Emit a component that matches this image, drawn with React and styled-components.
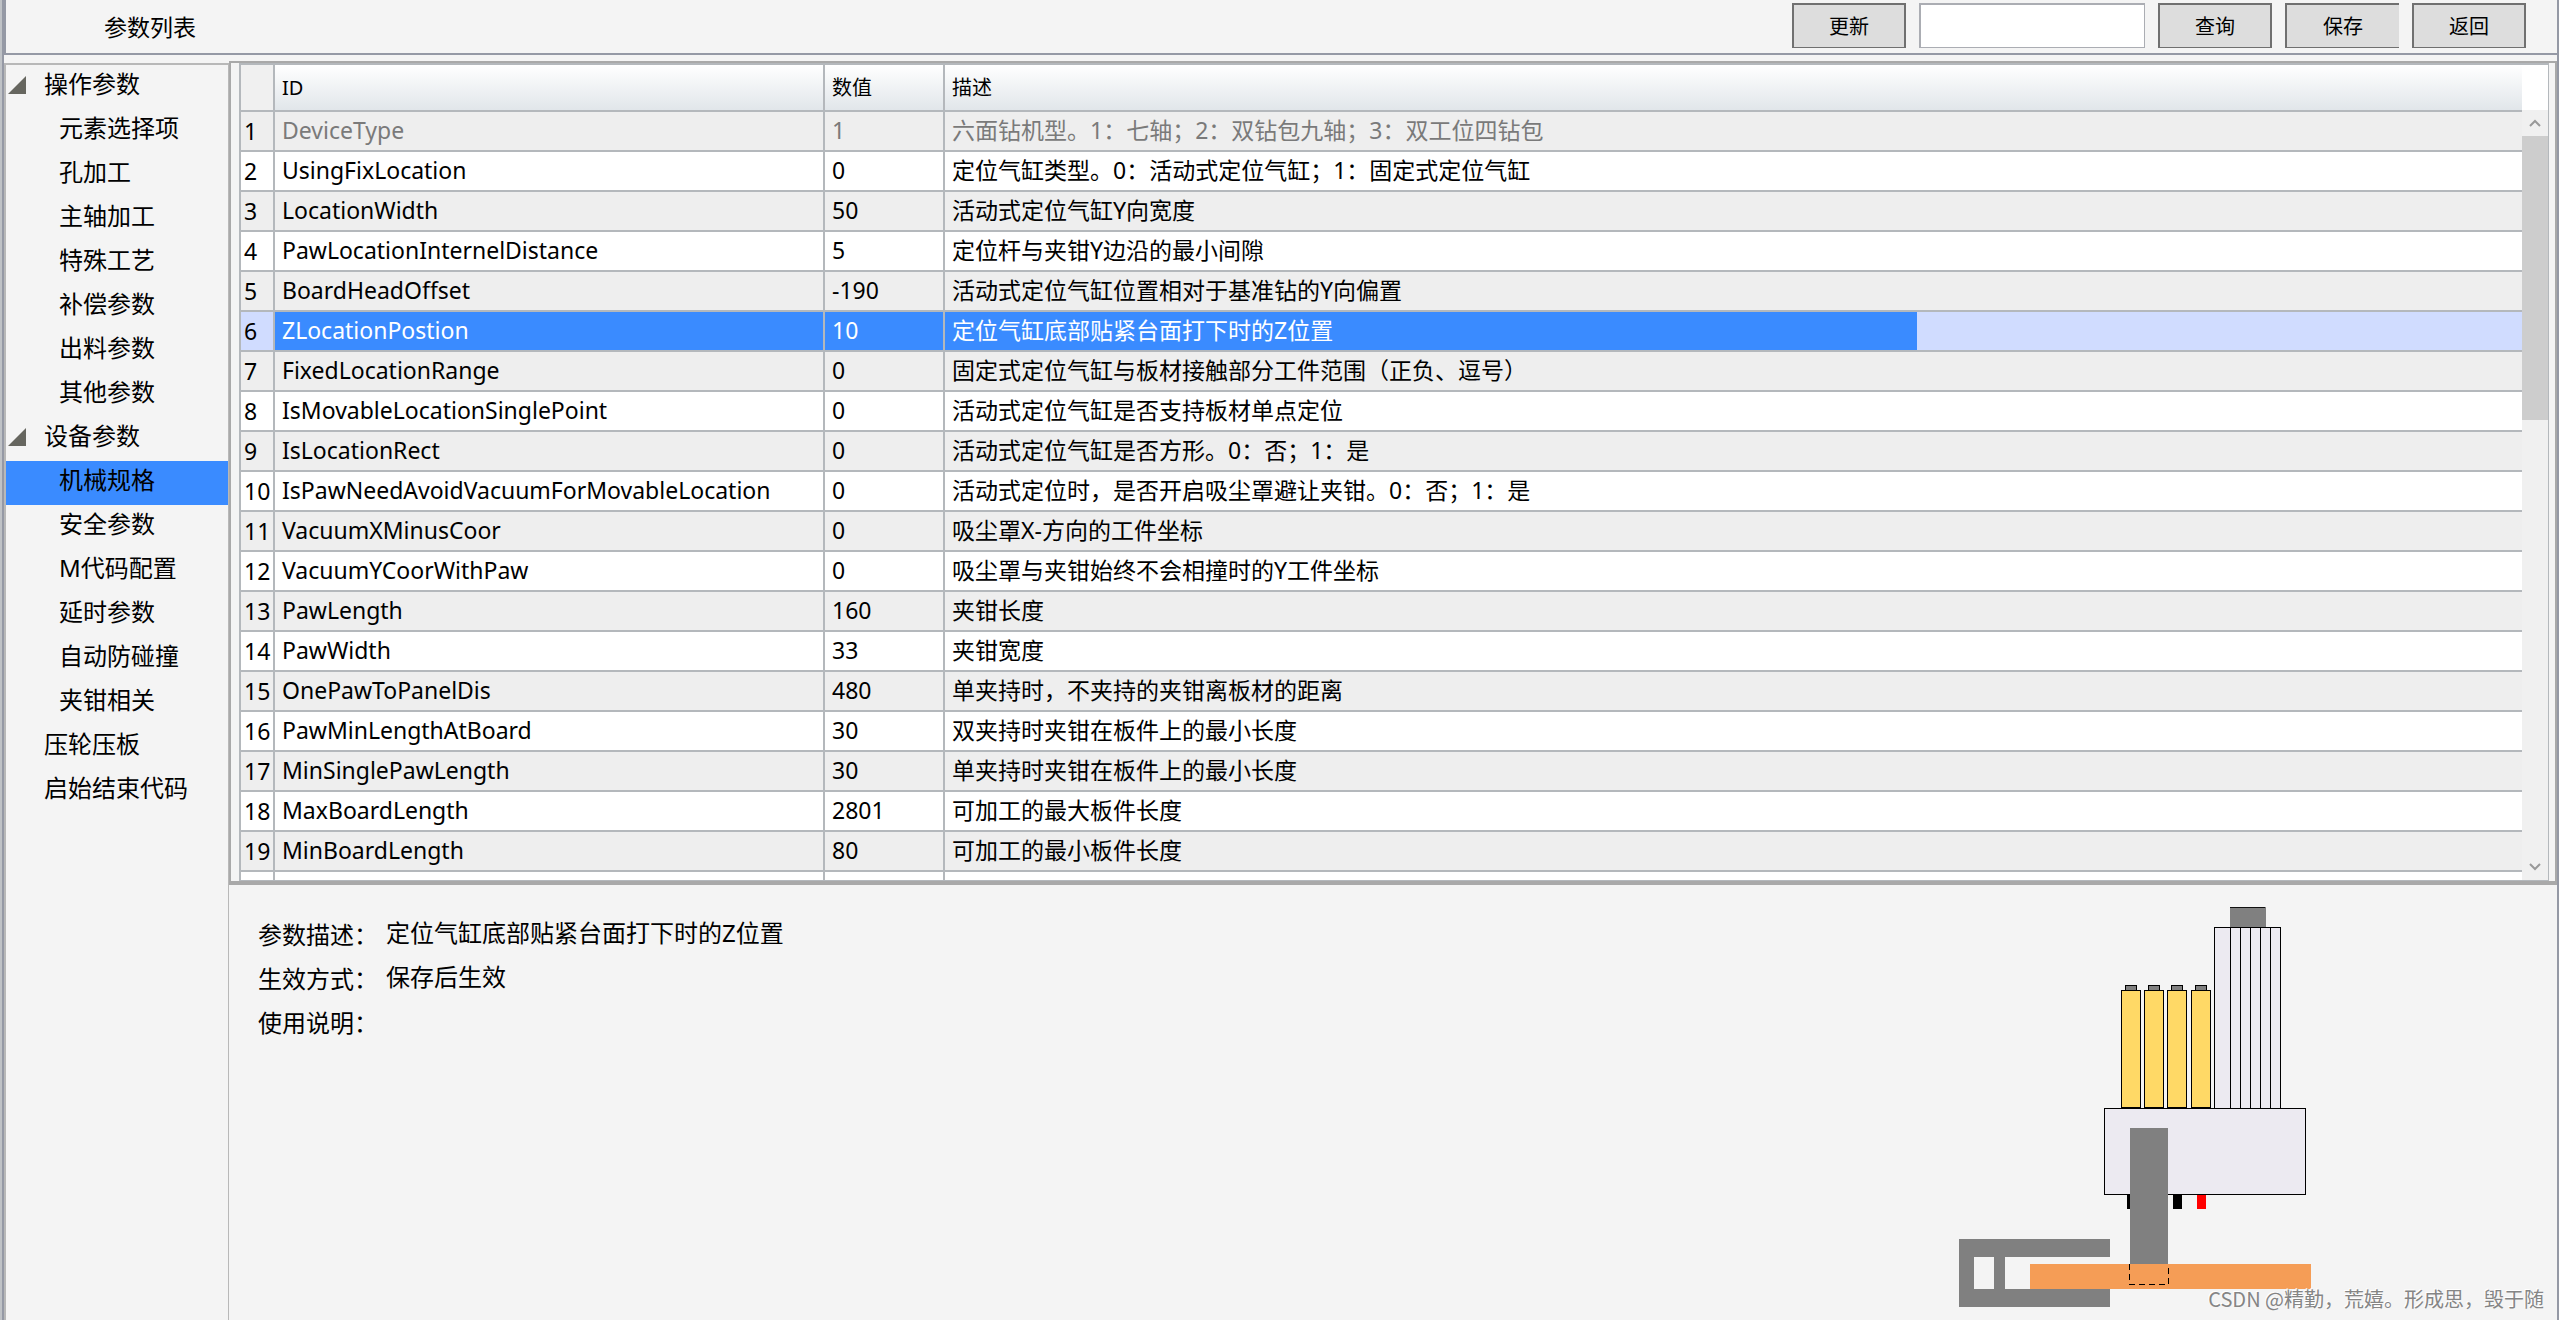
import React, { useState } from 'react';
import styled, { createGlobalStyle } from 'styled-components';

const SANS = '"Noto Sans", "Noto Sans CJK SC", sans-serif';
const GRID = '#b4b8bc';
const SLATE = '#9599a5';

const GlobalStyle = createGlobalStyle`
  * { box-sizing: border-box; }
  body {
    margin: 0;
    background: #f4f4f4;
    color: #000;
    font-family: ${SANS};
    font-size: 24px;
  }
  button, input { font: inherit; color: inherit; border-radius: 0; }
`;

const Window = styled.div`
  position: relative;
  display: flex;
  flex-direction: column;
  min-height: 100vh;
  border-left: 2px solid ${SLATE};
  border-right: 2px solid ${SLATE};
`;

const Desktop = styled.div`
  background: #bfc2c6;
  padding-left: 2px;
`;

const Header = styled.header`
  display: flex;
  align-items: flex-start;
  justify-content: space-between;
  padding: 3px 31px 5px 98px;
  border-left: 2px solid ${SLATE};
  border-bottom: 2px solid ${SLATE};
  background: #f4f4f4;
`;

const Title = styled.h1`
  margin: 0;
  font-size: 23px;
  font-weight: 400;
  line-height: 48px;
  height: 45px;
`;

const Toolbar = styled.form`
  display: flex;
  gap: 13px;
`;

const ToolButton = styled.button`
  width: 114px;
  height: 45px;
  padding: 2px 0 0;
  border: solid #707070;
  border-width: 2px ${(p) => (p.$open ? 0 : 2)}px 1px 2px;
  background: #ddd;
  font-size: 20px;
  line-height: 40px;
`;

const SearchBox = styled.input`
  width: 226px;
  height: 45px;
  padding: 0 8px;
  border: solid #abadb3;
  border-width: 2px 1px 1px 2px;
  background: #fff;
  font-size: 20px;
  outline: none;
`;

const Body = styled.div`
  flex: 1;
  display: flex;
  background: #f4f4f4;
`;

const Tree = styled.nav`
  flex: none;
  width: 225px;
  margin-top: 8px;
  border: solid #b8b8b8;
  border-width: 2px 1px 0 2px;
`;

const TreeList = styled.ul`
  margin: 0;
  padding: 0;
  list-style: none;
`;

const TreeItem = styled.button`
  display: flex;
  align-items: center;
  width: 100%;
  height: 44px;
  padding: 0 0 6px ${(p) => (p.$child ? 53 : 2)}px;
  border: 0;
  background: ${(p) => (p.$active ? '#3a8bff' : 'transparent')};
  text-align: left;
  line-height: 38px;
  white-space: nowrap;
`;

const Marker = styled.span`
  display: flex;
  width: 36px;
  padding-top: 2px;
`;

const Main = styled.main`
  flex: 1;
  min-width: 0;
  display: flex;
  flex-direction: column;
`;

const TablePane = styled.section`
  flex: 1 1 0;
  min-height: 0;
  display: flex;
  margin-top: 6px;
  padding: 0 6px 0 8px;
  border: 2px solid #a9a9a9;
  border-bottom-width: 4px;
`;

const TableFrame = styled.div`
  flex: 1;
  min-width: 0;
  display: flex;
  border: solid ${GRID};
  border-width: 2px 1px 1px 2px;
  background: #fff;
`;

const TableView = styled.div`
  flex: 1;
  min-width: 0;
  height: 100%;
  overflow: hidden;
  contain: size;
`;

const Table = styled.table`
  width: 100%;
  table-layout: fixed;
  border-collapse: separate;
  border-spacing: 0;
`;

const Col = styled.col`
  width: ${(p) => p.$w};
`;

const HeadCell = styled.th`
  height: 47px;
  padding: 0 7px;
  border: solid ${GRID};
  border-width: 0 ${(p) => (p.$open ? 0 : 2)}px 2px 0;
  background: ${(p) => (p.$corner ? '#f0f0f0' : 'linear-gradient(#fff, #e1e6ea)')};
  font-size: 20px;
  font-weight: 400;
  line-height: 28px;
  text-align: left;
`;

const Row = styled.tr`
  background: ${(p) => (p.$selected ? '#d0dcff' : p.$odd ? '#eee' : '#fff')};
  color: ${(p) => (p.$disabled ? '#7a7a7a' : '#000')};
`;

const RowNumber = styled.th`
  height: 40px;
  padding: 0 0 0 3px;
  border: solid ${GRID};
  border-width: 0 2px 2px 0;
  color: #000;
  font-size: 23px;
  font-weight: 400;
  line-height: 38px;
  text-align: left;
`;

const Cell = styled.td`
  height: 40px;
  padding: 0 7px 2px;
  border: solid ${GRID};
  border-width: 0 ${(p) => (p.$open ? 0 : 2)}px 2px 0;
  font-size: 23px;
  line-height: 36px;
  white-space: nowrap;
  ${(p) => p.$selected && 'background: #3a8bff; color: #fff;'}
`;

const ScrollColumn = styled.div`
  flex: none;
  width: 26px;
  padding-top: 45px;
  display: flex;
  flex-direction: column;
`;

const ScrollTrack = styled.div`
  flex: 1;
  display: flex;
  flex-direction: column;
  background: #f0f0f0;
`;

const ScrollArrow = styled.button`
  display: flex;
  align-items: center;
  justify-content: center;
  height: 26px;
  padding: 0;
  border: 0;
  background: transparent;
`;

const ScrollThumb = styled.div`
  height: 284px;
  margin-bottom: auto;
  background: #cdcdcd;
`;

const Detail = styled.section`
  flex: none;
  min-height: 435px;
  display: flex;
  justify-content: space-between;
  align-items: flex-start;
  padding: 22px 246px 0 29px;
`;

const Facts = styled.dl`
  display: grid;
  grid-template-columns: 120px auto;
  grid-auto-rows: 44px;
  column-gap: 8px;
  margin: 6px 0 0;
`;

const FactName = styled.dt`
  padding-top: 2px;
  line-height: 40px;
`;

const FactValue = styled.dd`
  margin: 0;
  line-height: 40px;
`;

const Watermark = styled.span`
  position: absolute;
  right: 13px;
  bottom: 6px;
  color: #858585;
  font-family: "Noto Sans CJK SC", sans-serif;
  font-size: 20px;
  line-height: 30px;
  text-shadow: -1px -1px 0 #fff;
`;

const TREE = [
  { name: '操作参数', children: ['元素选择项', '孔加工', '主轴加工', '特殊工艺', '补偿参数', '出料参数', '其他参数'] },
  { name: '设备参数', children: ['机械规格', '安全参数', 'M代码配置', '延时参数', '自动防碰撞', '夹钳相关'] },
  { name: '压轮压板' },
  { name: '启始结束代码' },
];

const ROWS = [
  ['DeviceType', '1', '六面钻机型。1：七轴；2：双钻包九轴；3：双工位四钻包'],
  ['UsingFixLocation', '0', '定位气缸类型。0：活动式定位气缸；1：固定式定位气缸'],
  ['LocationWidth', '50', '活动式定位气缸Y向宽度'],
  ['PawLocationInternelDistance', '5', '定位杆与夹钳Y边沿的最小间隙'],
  ['BoardHeadOffset', '-190', '活动式定位气缸位置相对于基准钻的Y向偏置'],
  ['ZLocationPostion', '10', '定位气缸底部贴紧台面打下时的Z位置'],
  ['FixedLocationRange', '0', '固定式定位气缸与板材接触部分工件范围（正负、逗号）'],
  ['IsMovableLocationSinglePoint', '0', '活动式定位气缸是否支持板材单点定位'],
  ['IsLocationRect', '0', '活动式定位气缸是否方形。0：否；1：是'],
  ['IsPawNeedAvoidVacuumForMovableLocation', '0', '活动式定位时，是否开启吸尘罩避让夹钳。0：否；1：是'],
  ['VacuumXMinusCoor', '0', '吸尘罩X-方向的工件坐标'],
  ['VacuumYCoorWithPaw', '0', '吸尘罩与夹钳始终不会相撞时的Y工件坐标'],
  ['PawLength', '160', '夹钳长度'],
  ['PawWidth', '33', '夹钳宽度'],
  ['OnePawToPanelDis', '480', '单夹持时，不夹持的夹钳离板材的距离'],
  ['PawMinLengthAtBoard', '30', '双夹持时夹钳在板件上的最小长度'],
  ['MinSinglePawLength', '30', '单夹持时夹钳在板件上的最小长度'],
  ['MaxBoardLength', '2801', '可加工的最大板件长度'],
  ['MinBoardLength', '80', '可加工的最小板件长度'],
];

function Expanded() {
  return (
    <svg width="18" height="18" viewBox="0 0 18 18" aria-hidden="true">
      <polygon points="0,18 18,0 18,18" fill="#66665f" />
    </svg>
  );
}

function Chevron({ up }) {
  return (
    <svg width="12" height="8" viewBox="0 0 12 8" aria-hidden="true">
      <path d={up ? 'M1 7 L6 2 L11 7' : 'M1 1 L6 6 L11 1'} fill="none" stroke="#999" strokeWidth="2" />
    </svg>
  );
}

function MachineDrawing() {
  const cylinders = [162, 185, 208, 232];
  const ribs = [271, 281, 291, 301, 311];
  return (
    <svg width="352" height="401" viewBox="0 0 352 401" shapeRendering="crispEdges" role="img" aria-label="钻包">
      <rect x="271" y="0" width="36" height="20" fill="#808080" />
      <rect x="271" y="0" width="35" height="1" fill="#111" />
      <rect x="255.5" y="20.5" width="66" height="181" fill="#eceaf1" stroke="#000" />
      {ribs.map((x) => (
        <rect key={x} x={x} y="20" width="1" height="181" fill="#000" />
      ))}
      {cylinders.map((x) => (
        <g key={x} stroke="#000">
          <rect x={x + 4.5} y="78.5" width="11" height="5" fill="#808080" />
          <rect x={x + 0.5} y="83.5" width="19" height="117" fill="#ffd966" />
        </g>
      ))}
      <rect x="145.5" y="201.5" width="201" height="86" fill="#eceaf1" stroke="#000" />
      <rect x="168" y="288" width="9" height="14" fill="#000" />
      <rect x="214" y="288" width="9" height="14" fill="#000" />
      <rect x="238" y="288" width="9" height="14" fill="#f00" />
      <rect x="171" y="221" width="38" height="136" fill="#808080" />
      <path d="M0 332 H151 V350 H15 V382 H151 V400 H0 Z" fill="#808080" />
      <rect x="35" y="350" width="11" height="32" fill="#808080" />
      <rect x="71" y="357" width="281" height="25" fill="#f59d56" />
      <path d="M170.5 357 V377.5 H209.5 V357" fill="none" stroke="#000" strokeDasharray="6 4" />
    </svg>
  );
}

export default function App() {
  const [page, setPage] = useState('机械规格');
  const [query, setQuery] = useState('');
  const [selected, setSelected] = useState(5);

  return (
    <Desktop>
      <GlobalStyle />
      <Window>
        <Header>
          <Title>参数列表</Title>
          <Toolbar onSubmit={(e) => e.preventDefault()}>
            <ToolButton type="button">更新</ToolButton>
            <SearchBox aria-label="查询" value={query} onChange={(e) => setQuery(e.target.value)} />
            <ToolButton type="submit">查询</ToolButton>
            <ToolButton type="button" $open>保存</ToolButton>
            <ToolButton type="button">返回</ToolButton>
          </Toolbar>
        </Header>
        <Body>
          <Tree aria-label="参数列表">
            <TreeList>
              {TREE.map((group) => (
                <li key={group.name}>
                  <TreeItem type="button" $active={page === group.name} onClick={() => setPage(group.name)}>
                    <Marker>{group.children && <Expanded />}</Marker>
                    {group.name}
                  </TreeItem>
                  {group.children && (
                    <TreeList>
                      {group.children.map((name) => (
                        <li key={name}>
                          <TreeItem type="button" $child $active={page === name} onClick={() => setPage(name)}>
                            {name}
                          </TreeItem>
                        </li>
                      ))}
                    </TreeList>
                  )}
                </li>
              ))}
            </TreeList>
          </Tree>
          <Main>
            <TablePane>
              <TableFrame>
                <TableView>
                  <Table>
                    <colgroup>
                      <Col $w="34px" />
                      <Col $w="550px" />
                      <Col $w="120px" />
                      <Col $w="972px" />
                      <Col $w="auto" />
                    </colgroup>
                    <thead>
                      <tr>
                        <HeadCell $corner />
                        <HeadCell>ID</HeadCell>
                        <HeadCell>数值</HeadCell>
                        <HeadCell $open>描述</HeadCell>
                        <HeadCell $open />
                      </tr>
                    </thead>
                    <tbody>
                      {ROWS.map(([id, value, text], i) => {
                        const on = i === selected;
                        return (
                          <Row key={id} $odd={i % 2 === 0} $selected={on} $disabled={i === 0} onClick={() => setSelected(i)}>
                            <RowNumber scope="row">{i + 1}</RowNumber>
                            <Cell $selected={on}>{id}</Cell>
                            <Cell $selected={on}>{value}</Cell>
                            <Cell $selected={on} $open>{text}</Cell>
                            <Cell $open />
                          </Row>
                        );
                      })}
                      <Row>
                        <RowNumber />
                        <Cell />
                        <Cell />
                        <Cell $open />
                        <Cell $open />
                      </Row>
                    </tbody>
                  </Table>
                </TableView>
                <ScrollColumn>
                  <ScrollTrack>
                    <ScrollArrow type="button" aria-label="向上"><Chevron up /></ScrollArrow>
                    <ScrollThumb />
                    <ScrollArrow type="button" aria-label="向下"><Chevron /></ScrollArrow>
                  </ScrollTrack>
                </ScrollColumn>
              </TableFrame>
            </TablePane>
            <Detail>
              <Facts>
                <FactName>参数描述：</FactName>
                <FactValue>{ROWS[selected][2]}</FactValue>
                <FactName>生效方式：</FactName>
                <FactValue>保存后生效</FactValue>
                <FactName>使用说明：</FactName>
                <FactValue />
              </Facts>
              <MachineDrawing />
            </Detail>
          </Main>
        </Body>
        <Watermark>CSDN @精勤，荒嬉。形成思，毁于随</Watermark>
      </Window>
    </Desktop>
  );
}
